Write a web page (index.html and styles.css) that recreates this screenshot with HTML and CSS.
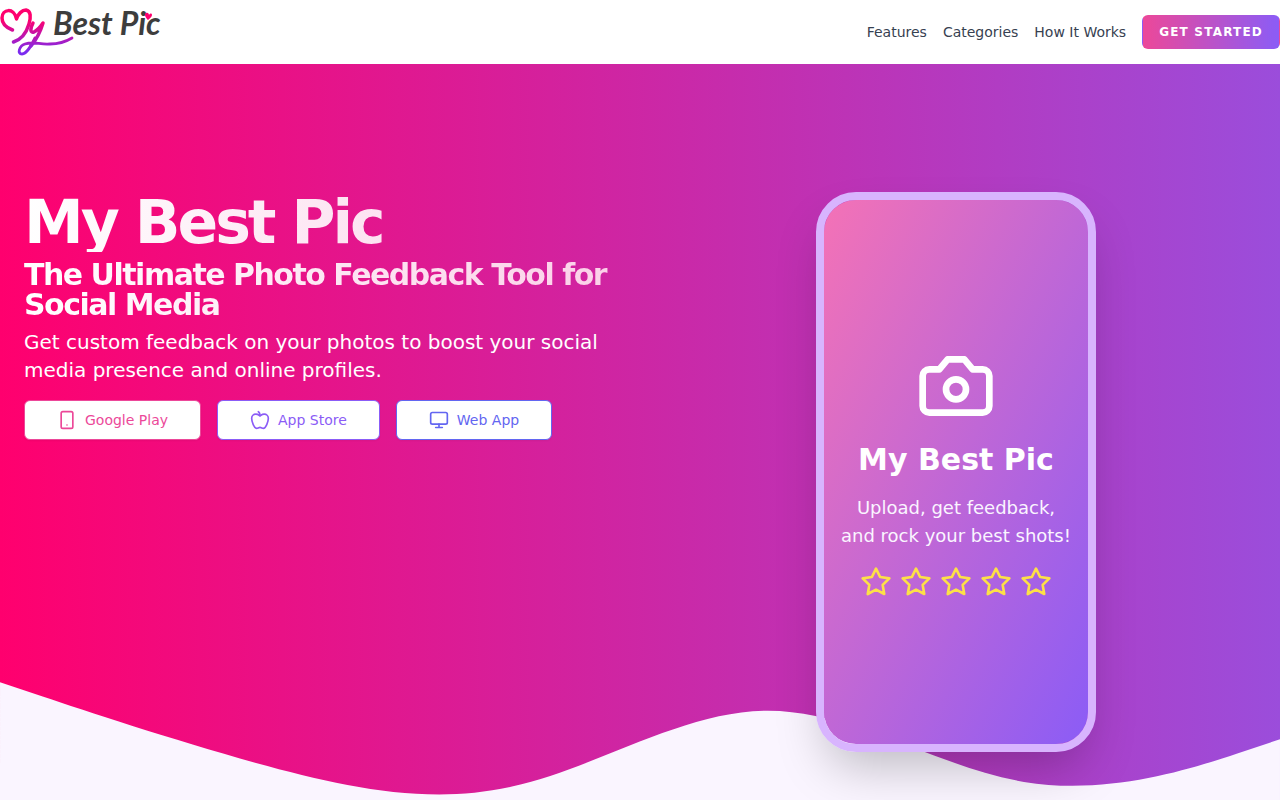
FILE: index.html
```html
<!DOCTYPE html>
<html lang="en">
<head>
    <meta charset="UTF-8">
    <meta name="viewport" content="width=device-width, initial-scale=1.0">
    <title>My Best Pic</title>
    <link rel="stylesheet" href="styles.css">
</head>
<body>
    <header class="header">
        <a href="#" class="logo" aria-label="My Best Pic">
            <svg class="logo-image" viewBox="0 0 164 48" fill="none">
                <defs>
                    <linearGradient id="logoGradient" gradientUnits="userSpaceOnUse" x1="0" y1="12" x2="0" y2="44">
                        <stop offset="0" stop-color="#ff006e"/>
                        <stop offset="1" stop-color="#7a2bf0"/>
                    </linearGradient>
                </defs>
                <g stroke="url(#logoGradient)" stroke-linecap="round" stroke-linejoin="round">
                    <path stroke-width="3.500" d="M12.500 22C7 20 2 16 2 10C2 1 14 -1 16.500 11C18 6 22 2 26 2C31 3 31 9 29 16C26 26 20 32 13.500 34"/>
                    <path stroke-width="3.500" d="M33 15C30 21 30 25 34 24C38 22 41 18 43 15C40 25 36 32 31 38"/>
                    <path stroke-width="2.800" d="M35 30C31 38 27 46 22 46C17 46 19 38 25 36C34 33 40 37 50 36C60 36 67 33 72 30"/>
                </g>
                <text class="logo-text" x="53" y="27">Best Pic</text>
                <path fill="#ff006e" d="M148 12C145 9 144 6 146 5C148 4 149 6 149 7C150 5 152 5 152 7C152 9 150 10 148 12Z"/>
            </svg>
        </a>
        <nav class="nav">
            <a href="#features" class="nav-link">Features</a>
            <a href="#categories" class="nav-link">Categories</a>
            <a href="#how-it-works" class="nav-link">How It Works</a>
            <button type="button" class="get-started">Get Started</button>
        </nav>
    </header>

    <main class="hero">
        <svg class="wave" viewBox="0 0 1440 320" aria-hidden="true">
            <path fill="#faf5ff" d="M0,96L48,112C96,128,192,160,288,186.7C384,213,480,235,576,213.3C672,192,768,128,864,128C960,128,1056,192,1152,208C1248,224,1344,192,1392,176L1440,160L1440,320L0,320Z"/>
        </svg>
        <div class="hero-content">
            <div class="intro">
                <h1>My Best Pic</h1>
                <h2>The Ultimate Photo Feedback Tool for Social Media</h2>
                <p>Get custom feedback on your photos to boost your social media presence and online profiles.</p>
                <div class="store-buttons">
                    <button type="button" class="store-button google">
                        <svg class="icon" viewBox="0 0 24 24"><rect x="5" y="2" width="14" height="20" rx="2"/><path d="M12 18h.01"/></svg>
                        Google Play
                    </button>
                    <button type="button" class="store-button apple">
                        <svg class="icon" viewBox="0 0 24 24"><path d="M12 20.940c1.500 0 2.750 1.060 4 1.060 3 0 6-8 6-12.220A4.910 4.910 0 0 0 17 5c-2.220 0-4 1.440-5 2-1-.56-2.780-2-5-2a4.900 4.900 0 0 0-5 4.780C2 14 5 22 8 22c1.250 0 2.500-1.060 4-1.060Z"/><path d="M10 2c1 .5 2 2 2 5"/></svg>
                        App Store
                    </button>
                    <button type="button" class="store-button web">
                        <svg class="icon" viewBox="0 0 24 24"><rect x="2" y="3" width="20" height="14" rx="2"/><path d="M8 21h8M12 17v4"/></svg>
                        Web App
                    </button>
                </div>
            </div>
            <div class="phone-column">
                <div class="phone">
                    <svg class="icon camera" viewBox="0 0 24 24"><path d="M14.500 4h-5L7 7H4a2 2 0 0 0-2 2v9a2 2 0 0 0 2 2h16a2 2 0 0 0 2-2V9a2 2 0 0 0-2-2h-3l-2.500-3z"/><circle cx="12" cy="13" r="3"/></svg>
                    <h3>My Best Pic</h3>
                    <p>Upload, get feedback, and rock your best shots!</p>
                    <div class="stars">
                        <svg class="icon star" viewBox="0 0 24 24"><polygon points="12 2 15.090 8.260 22 9.270 17 14.140 18.180 21.020 12 17.770 5.820 21.020 7 14.140 2 9.270 8.910 8.260 12 2"/></svg>
                        <svg class="icon star" viewBox="0 0 24 24"><polygon points="12 2 15.090 8.260 22 9.270 17 14.140 18.180 21.020 12 17.770 5.820 21.020 7 14.140 2 9.270 8.910 8.260 12 2"/></svg>
                        <svg class="icon star" viewBox="0 0 24 24"><polygon points="12 2 15.090 8.260 22 9.270 17 14.140 18.180 21.020 12 17.770 5.820 21.020 7 14.140 2 9.270 8.910 8.260 12 2"/></svg>
                        <svg class="icon star" viewBox="0 0 24 24"><polygon points="12 2 15.090 8.260 22 9.270 17 14.140 18.180 21.020 12 17.770 5.820 21.020 7 14.140 2 9.270 8.910 8.260 12 2"/></svg>
                        <svg class="icon star" viewBox="0 0 24 24"><polygon points="12 2 15.090 8.260 22 9.270 17 14.140 18.180 21.020 12 17.770 5.820 21.020 7 14.140 2 9.270 8.910 8.260 12 2"/></svg>
                    </div>
                </div>
            </div>
        </div>
    </main>
</body>
</html>
```
FILE: styles.css
```css
:root {
    --pink: #ec4899;
    --purple: #8b5cf6;
    --indigo: #6366f1;
    --text-color: #374151;
    --page-bg: #faf5ff;
}

* {
    box-sizing: border-box;
}

body, h1, h2, h3, p {
    margin: 0;
}

body, button {
    font-family: 'DejaVu Sans', sans-serif;
}

body {
    background-color: var(--page-bg);
    color: var(--text-color);
}

.header {
    display: flex;
    align-items: center;
    justify-content: space-between;
    padding: 8px 0;
    background-color: #ffffff;
}

.logo-image {
    display: block;
    height: 48px;
    overflow: visible;
}

.logo-text {
    font-family: 'Lato', sans-serif;
    font-size: 32px;
    font-style: italic;
    font-weight: bold;
    fill: #3d3d3d;
}

.nav {
    display: flex;
    align-items: center;
    gap: 16px;
}

.nav-link {
    color: var(--text-color);
    font-size: 14px;
    line-height: 20px;
    text-decoration: none;
}

.get-started {
    padding: 8px 16px;
    border: 1px solid transparent;
    border-radius: 6px;
    background-image: linear-gradient(to right, var(--pink), var(--purple));
    color: #ffffff;
    font-size: 12px;
    font-weight: 600;
    line-height: 16px;
    letter-spacing: 0.1em;
    text-transform: uppercase;
}

.hero {
    position: relative;
    padding: 128px 24px;
    background-image: linear-gradient(to right, #ff006e, #9b4ddb);
}

/* wave along the bottom edge, behind the phone */
.wave {
    position: absolute;
    left: 0;
    bottom: -1px;
    width: 100%;
}

.hero-content {
    position: relative;
    display: grid;
    grid-template-columns: 1fr 1fr;
    gap: 32px;
}

.intro {
    display: flex;
    flex-direction: column;
    gap: 8px;
    color: #ffffff;
}

h1, h2 {
    background-image: linear-gradient(to right, #ffffff, #fbcfe8);
    background-clip: text;
    -webkit-background-clip: text;
    color: transparent;
    line-height: 1;
    letter-spacing: -0.05em;
}

h1 {
    font-size: 60px;
}

h2 {
    font-size: 30px;
}

.intro p {
    font-size: 20px;
    line-height: 28px;
}

.store-buttons {
    display: flex;
    flex-wrap: wrap;
    gap: 16px;
    padding-top: 8px;
}

.icon {
    width: 20px;
    height: 20px;
    fill: none;
    stroke: currentColor;
    stroke-width: 2;
    stroke-linecap: round;
    stroke-linejoin: round;
}

.store-button {
    display: flex;
    align-items: center;
    gap: 8px;
    height: 40px;
    padding: 8px 32px;
    border: 1px solid currentColor;
    border-radius: 6px;
    background-color: #ffffff;
    font-size: 14px;
    line-height: 20px;
    box-shadow: 0 1px 2px rgba(0, 0, 0, 0.05);
}

.google {
    color: var(--pink);
}

.apple {
    color: var(--purple);
}

.web {
    color: var(--indigo);
}

.phone-column {
    display: flex;
    justify-content: center;
}

.phone {
    display: flex;
    flex-direction: column;
    align-items: center;
    justify-content: center;
    gap: 16px;
    width: 280px;
    height: 560px;
    padding: 16px;
    border: 8px solid #d8b4fe;
    border-radius: 40px;
    background: linear-gradient(to bottom right, #f472b6, var(--purple)) padding-box;
    box-shadow: 0 25px 50px -12px rgba(0, 0, 0, 0.25);
    color: #ffffff;
    text-align: center;
}

.camera {
    width: 80px;
    height: 80px;
}

.phone h3 {
    font-size: 30px;
    line-height: 36px;
}

.phone p {
    color: #faf5ff;
    font-size: 18px;
    line-height: 28px;
}

.stars {
    display: flex;
    gap: 8px;
}

.star {
    width: 32px;
    height: 32px;
    color: #fde047;
}

button {
    cursor: pointer;
}
```
